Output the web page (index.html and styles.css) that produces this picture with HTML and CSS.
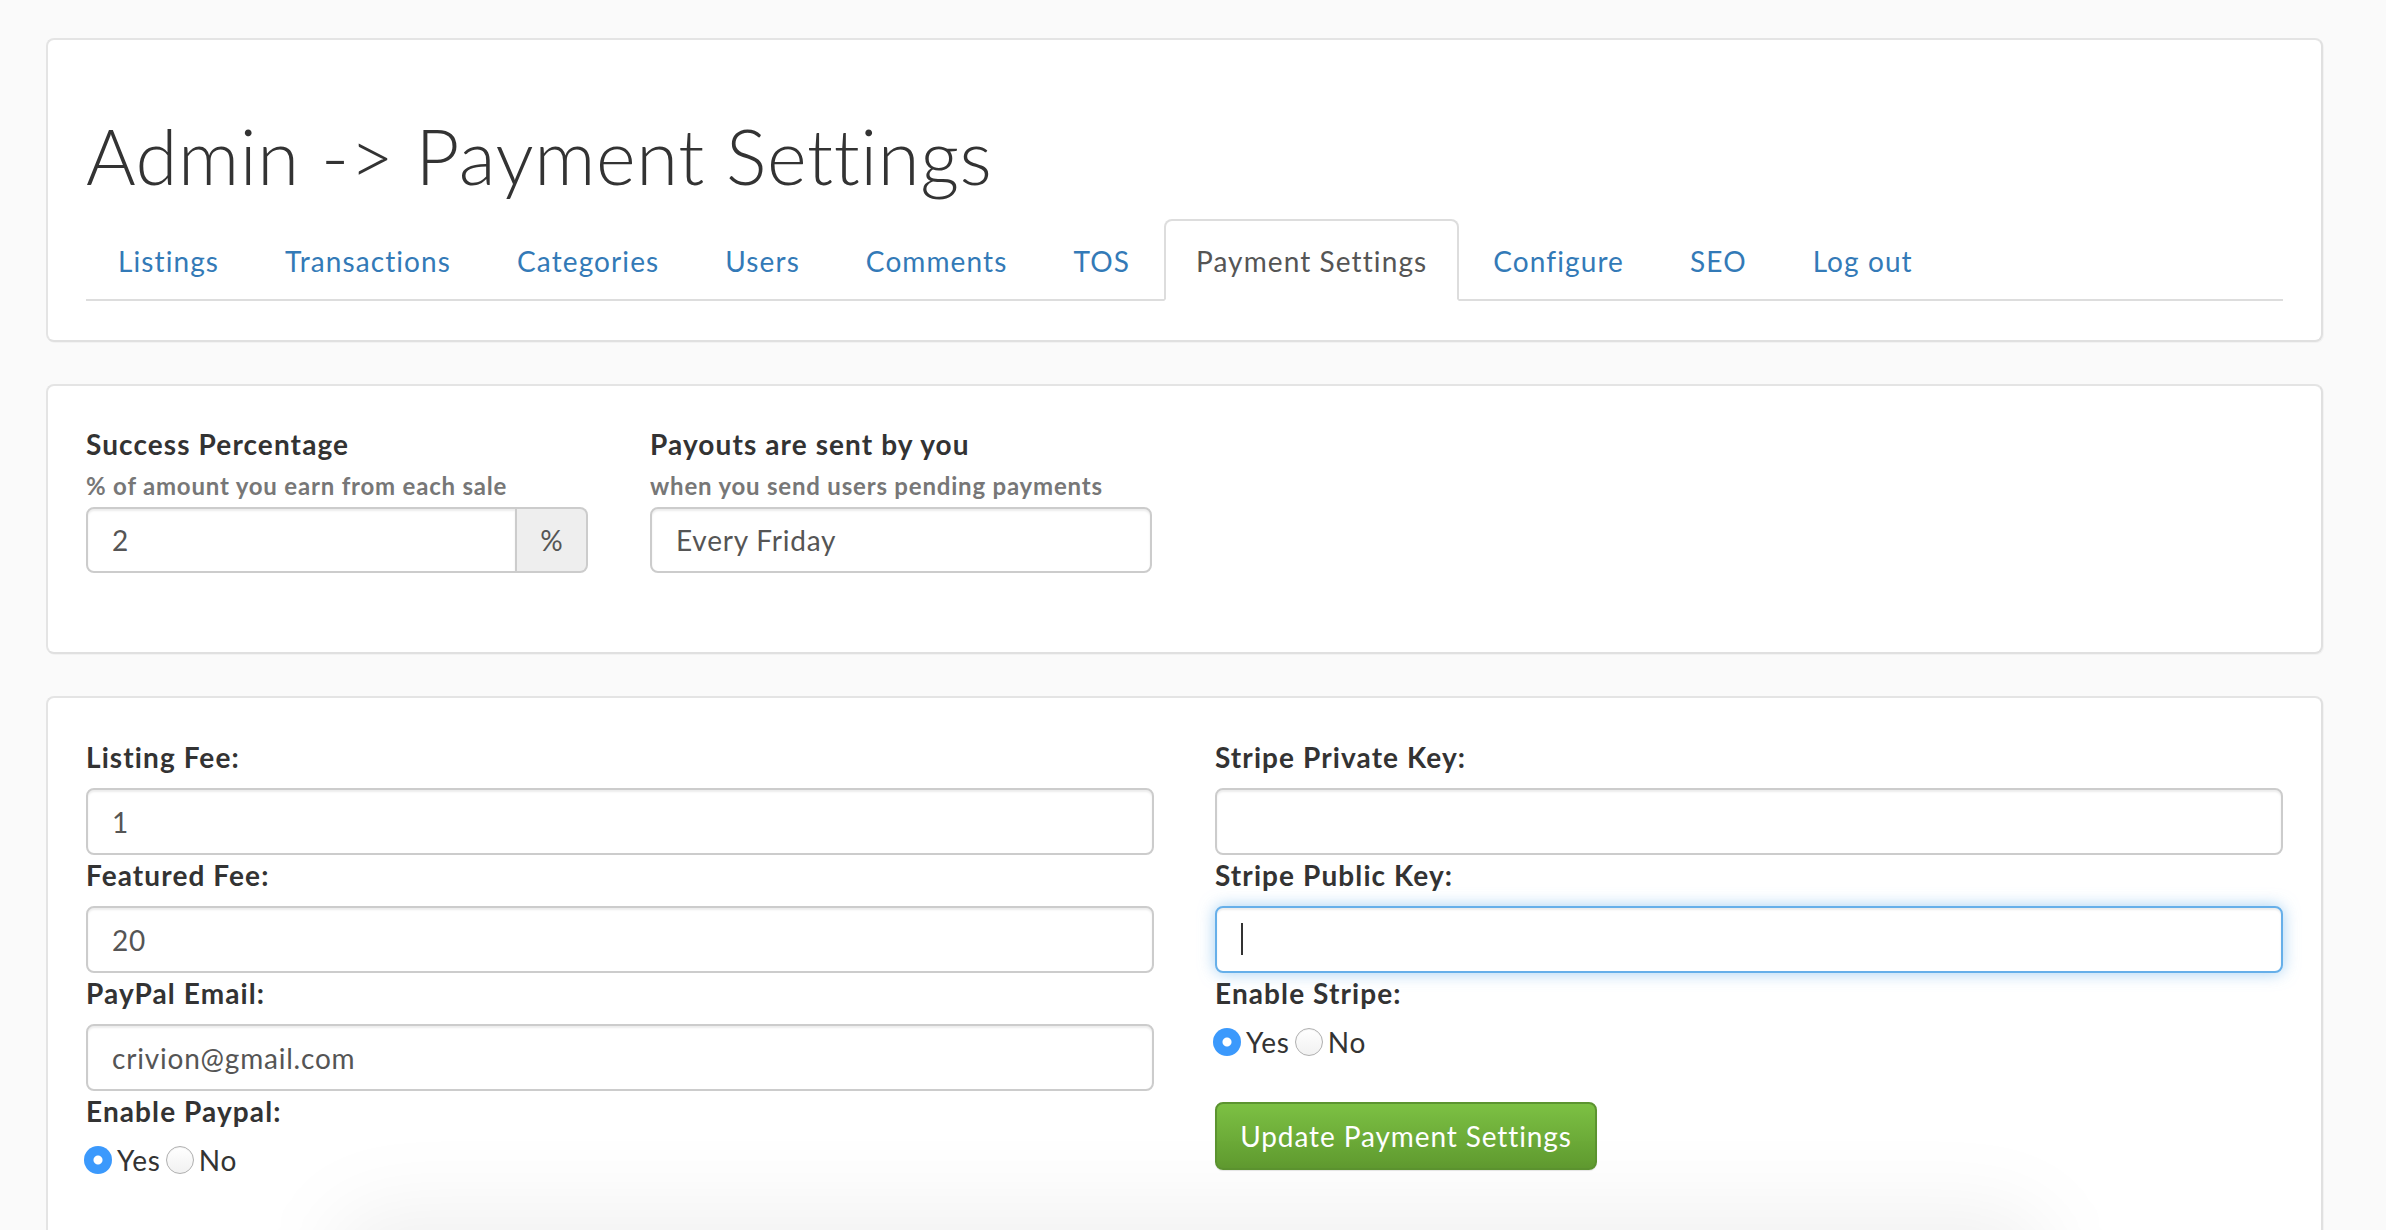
FILE: index.html
```html
<!DOCTYPE html>
<html lang="en">
<head>
<meta charset="utf-8">
<title>Admin -&gt; Payment Settings</title>
<link rel="stylesheet" href="styles.css">
</head>
<body>
<div class="page">
  <section class="panel panel-head">
    <h1 class="title">Admin -&gt; Payment Settings</h1>
    <ul class="tabs">
      <li class="tab"><a href="#">Listings</a></li>
      <li class="tab"><a href="#">Transactions</a></li>
      <li class="tab"><a href="#">Categories</a></li>
      <li class="tab"><a href="#">Users</a></li>
      <li class="tab"><a href="#">Comments</a></li>
      <li class="tab"><a href="#">TOS</a></li>
      <li class="tab active"><a href="#">Payment Settings</a></li>
      <li class="tab"><a href="#">Configure</a></li>
      <li class="tab"><a href="#">SEO</a></li>
      <li class="tab"><a href="#">Log out</a></li>
    </ul>
  </section>

  <section class="panel panel-rate">
    <div class="row-4">
      <div class="field">
        <label class="lbl">Success Percentage</label>
        <p class="help">% of amount you earn from each sale</p>
        <div class="input-group">
          <input class="control control-grouped" type="text" value="2">
          <span class="addon">%</span>
        </div>
      </div>
      <div class="field">
        <label class="lbl">Payouts are sent by you</label>
        <p class="help">when you send users pending payments</p>
        <input class="control" type="text" value="Every Friday">
      </div>
    </div>
  </section>

  <section class="panel panel-fees">
    <div class="row-2">
      <div class="col">
        <label class="lbl lbl-form">Listing Fee:</label>
        <input class="control" type="text" value="1">
        <label class="lbl lbl-form">Featured Fee:</label>
        <input class="control" type="text" value="20">
        <label class="lbl lbl-form">PayPal Email:</label>
        <input class="control" type="text" value="crivion@gmail.com">
        <label class="lbl lbl-form">Enable Paypal:</label>
        <div class="radios">
          <span class="radio checked"></span><span class="radio-text">Yes</span>
          <span class="radio"></span><span class="radio-text">No</span>
        </div>
      </div>
      <div class="col">
        <label class="lbl lbl-form">Stripe Private Key:</label>
        <input class="control" type="text" value="">
        <label class="lbl lbl-form">Stripe Public Key:</label>
        <div class="focus-wrap">
          <input class="control control-focus" type="text" value="">
          <span class="caret"></span>
        </div>
        <label class="lbl lbl-form">Enable Stripe:</label>
        <div class="radios">
          <span class="radio checked"></span><span class="radio-text">Yes</span>
          <span class="radio"></span><span class="radio-text">No</span>
        </div>
        <button class="btn-success" type="button">Update Payment Settings</button>
      </div>
    </div>
  </section>
</div>
<div class="bottom-shadow"></div>
</body>
</html>
```

FILE: styles.css
```css
html, body {
  margin: 0;
  padding: 0;
}
body {
  background: #fafafa;
  font-family: Lato, "Open Sans", sans-serif;
  color: #333;
  overflow: hidden;
  height: 1230px;
  position: relative;
}
.page {
  padding: 38px 0 0 46px;
}
.panel {
  box-sizing: border-box;
  width: 2277px;
  background: #fff;
  border: 2px solid #e4e4e4;
  border-right-color: #e0e0e0;
  border-bottom-color: #e0e0e0;
  border-radius: 8px;
  box-shadow: 1px 1px 0 rgba(0,0,0,0.03);
  padding: 0 38px;
  margin-bottom: 42px;
}
.panel-head {
  height: 304px;
  padding-top: 78px;
}
.title {
  margin: 0;
  font-size: 76px;
  line-height: 76px;
  font-weight: 300;
  color: #333;
  letter-spacing: 0.6px;
}
.tabs {
  list-style: none;
  margin: 25px 0 0;
  padding: 0;
  display: flex;
  border-bottom: 2px solid #ddd;
}
.tab {
  margin-right: 2px;
  margin-bottom: -2px;
}
.tab a {
  display: block;
  padding: 20px 30px 18px;
  line-height: 40px;
  font-size: 28px;
  letter-spacing: 1.1px;
  color: #337ab7;
  text-decoration: none;
  border: 2px solid transparent;
  border-radius: 8px 8px 0 0;
}
.tab.active a {
  color: #555;
  background: #fff;
  border-color: #ddd;
  border-bottom-color: transparent;
}

.panel-rate {
  height: 270px;
  padding-top: 38px;
}
.row-4 {
  display: grid;
  grid-template-columns: repeat(4, 502px);
  column-gap: 62px;
}
.lbl {
  display: block;
  font-size: 28px;
  line-height: 40px;
  font-weight: 700;
  letter-spacing: 1.1px;
  color: #333;
}
.help {
  margin: 6px 0 5px;
  font-size: 24px;
  line-height: 32px;
  font-weight: 700;
  letter-spacing: 0.8px;
  color: #777;
}
.control {
  box-sizing: border-box;
  display: block;
  width: 100%;
  height: 66px;
  margin: 0;
  padding: 0 24px;
  border: 2px solid #ccc;
  border-radius: 8px;
  box-shadow: inset 0 2px 2px rgba(0,0,0,0.075);
  font-family: inherit;
  font-size: 28px;
  letter-spacing: 0.8px;
  color: #555;
  background: #fff;
  outline: none;
}
.input-group {
  display: flex;
  height: 66px;
}
.control-grouped {
  flex: 1;
  width: auto;
  min-width: 0;
  border-radius: 8px 0 0 8px;
}
.addon {
  box-sizing: border-box;
  width: 71px;
  display: flex;
  align-items: center;
  justify-content: center;
  background: #eee;
  border: 2px solid #ccc;
  border-left: 0;
  border-radius: 0 8px 8px 0;
  font-size: 28px;
  color: #555;
}

.panel-fees {
  min-height: 600px;
  padding-top: 39px;
}
.row-2 {
  display: grid;
  grid-template-columns: 1fr 1fr;
  column-gap: 61px;
}
.col .control {
  height: 67px;
}
.lbl-form {
  margin-bottom: 11px;
}
.focus-wrap {
  position: relative;
}
.control-focus {
  border-color: #66afe9;
  box-shadow: inset 0 2px 2px rgba(0,0,0,0.075), 0 0 16px rgba(102,175,233,0.6);
}
.caret {
  position: absolute;
  left: 26px;
  top: 17px;
  width: 2px;
  height: 32px;
  background: #333;
}
.radios {
  display: flex;
  align-items: center;
  height: 40px;
  margin-top: -2px;
  margin-left: -2px;
}
.radio {
  box-sizing: border-box;
  width: 28px;
  height: 28px;
  border-radius: 50%;
  border: 1px solid #b0b0b0;
  background: linear-gradient(#fff, #f1f1f1);
  box-shadow: inset 0 1px 1px rgba(0,0,0,0.05);
}
.radio.checked {
  border: 0;
  background: radial-gradient(circle, #fff 0, #fff 4px, #3b99fc 5px);
  box-shadow: none;
}
.radio-text {
  font-size: 28px;
  line-height: 40px;
  letter-spacing: 0.8px;
  color: #333;
  margin: 0 5px;
}
.btn-success {
  display: block;
  margin-top: 40px;
  box-sizing: border-box;
  width: 382px;
  height: 68px;
  padding: 0 20px;
  font-family: inherit;
  font-size: 28px;
  letter-spacing: 0.9px;
  color: #fff;
  background: linear-gradient(#7cc043, #609b30);
  border: 2px solid #5c9430;
  border-radius: 8px;
  box-shadow: 0 1px 1px rgba(0,0,0,0.1);
}
.bottom-shadow {
  position: absolute;
  left: 330px;
  width: 1720px;
  top: 1210px;
  height: 120px;
  border-radius: 60px;
  background: rgba(0,0,0,0.06);
  filter: blur(40px);
}
```
